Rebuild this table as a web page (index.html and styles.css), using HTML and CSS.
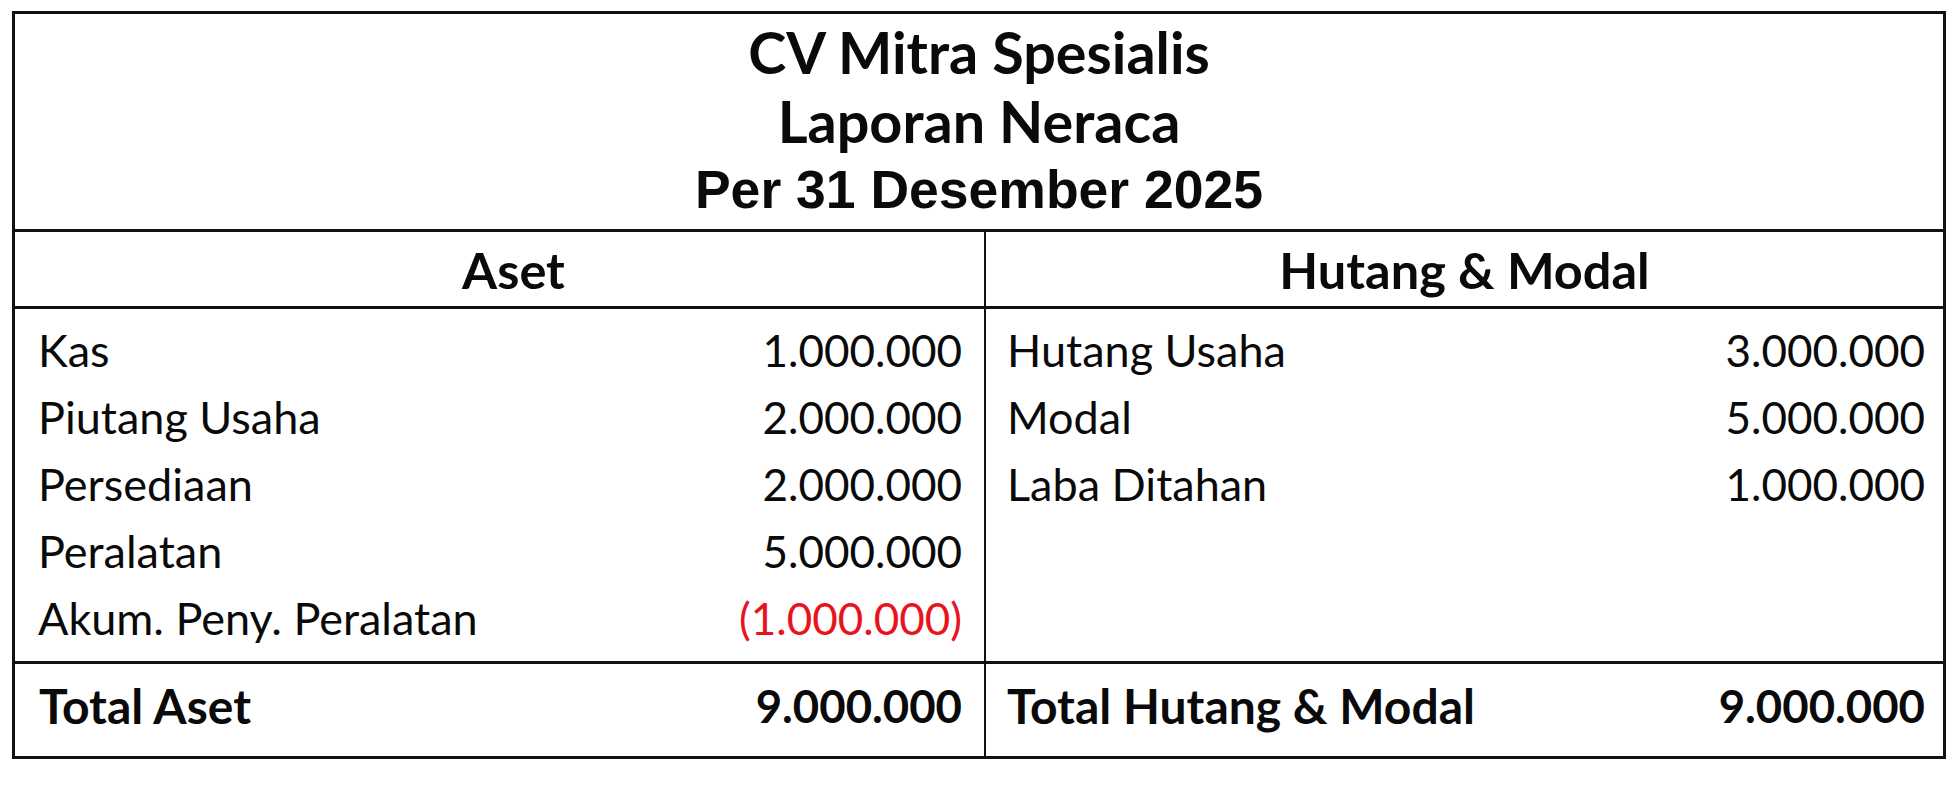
FILE: index.html
```html
<!DOCTYPE html>
<html lang="id">
<head>
<meta charset="utf-8">
<title>Laporan Neraca - CV Mitra Spesialis</title>
<link rel="stylesheet" href="styles.css">
</head>
<body>
<div class="sheet">
  <header class="title">
    <div class="title-line t1">CV Mitra Spesialis</div>
    <div class="title-line t2">Laporan Neraca</div>
    <div class="title-line t3">Per 31 Desember 2025</div>
  </header>
  <div class="grid">
    <div class="cell head left"><span class="head-aset">Aset</span></div>
    <div class="cell head right">Hutang &amp; Modal</div>

    <div class="cell items left">
      <div class="row"><span>Kas</span><span class="num">1.000.000</span></div>
      <div class="row"><span>Piutang Usaha</span><span class="num">2.000.000</span></div>
      <div class="row"><span>Persediaan</span><span class="num">2.000.000</span></div>
      <div class="row"><span>Peralatan</span><span class="num">5.000.000</span></div>
      <div class="row"><span>Akum. Peny. Peralatan</span><span class="num neg">(1.000.000)</span></div>
    </div>
    <div class="cell items right">
      <div class="row"><span>Hutang Usaha</span><span class="num">3.000.000</span></div>
      <div class="row"><span>Modal</span><span class="num">5.000.000</span></div>
      <div class="row"><span>Laba Ditahan</span><span class="num">1.000.000</span></div>
    </div>

    <div class="cell total left"><span class="total-label">Total Aset</span><span class="total-num">9.000.000</span></div>
    <div class="cell total right"><span class="total-label">Total Hutang &amp; Modal</span><span class="total-num">9.000.000</span></div>
  </div>
</div>
</body>
</html>
```

FILE: styles.css
```css
html, body {
  margin: 0;
  padding: 0;
  background: #ffffff;
}

body {
  font-family: "Lato", "Open Sans", sans-serif;
  color: #0a0a0a;
}

.sheet {
  margin: 11px 0 0 12px;
  width: 1934px;
  height: 748px;
  box-sizing: border-box;
  border: 3px solid #111;
  display: flex;
  flex-direction: column;
}

.title {
  height: 218px;
  box-sizing: border-box;
  border-bottom: 3px solid #111;
  padding-top: 3px;
  display: flex;
  flex-direction: column;
  align-items: center;
}

.title-line {
  line-height: 69px;
  height: 69px;
  font-weight: 700;
  white-space: nowrap;
}

.t1, .t2 {
  font-family: "Lato", sans-serif;
  font-size: 57.5px;
}

.t3 {
  font-family: "Liberation Sans", Arial, sans-serif;
  font-size: 53.5px;
}

.grid {
  flex: 1;
  display: grid;
  grid-template-columns: 971px 1fr;
  grid-template-rows: 77px 355px 1fr;
}

.cell {
  box-sizing: border-box;
}

.cell.left {
  border-right: 2px solid #111;
}

.head {
  border-bottom: 3px solid #111;
  display: flex;
  align-items: center;
  justify-content: center;
  font-weight: 700;
  font-size: 50.5px;
}

.head.left {
  padding-left: 28px;
}

.items {
  border-bottom: 3px solid #111;
  padding: 8px 22px 0 23px;
  font-size: 45px;
}

.items.right {
  padding-left: 21px;
  padding-right: 18px;
}

.row {
  height: 67px;
  line-height: 67px;
  display: flex;
  justify-content: space-between;
  white-space: nowrap;
}

.num {
  font-size: 44px;
}

.neg {
  color: #e8141b;
}

.total {
  display: flex;
  justify-content: space-between;
  align-items: center;
  padding: 0 22px 10px 24px;
  font-weight: 700;
}

.total.right {
  padding-left: 21px;
  padding-right: 18px;
}

.total-label {
  font-size: 48px;
}

.total-num {
  font-size: 45.5px;
}
```
